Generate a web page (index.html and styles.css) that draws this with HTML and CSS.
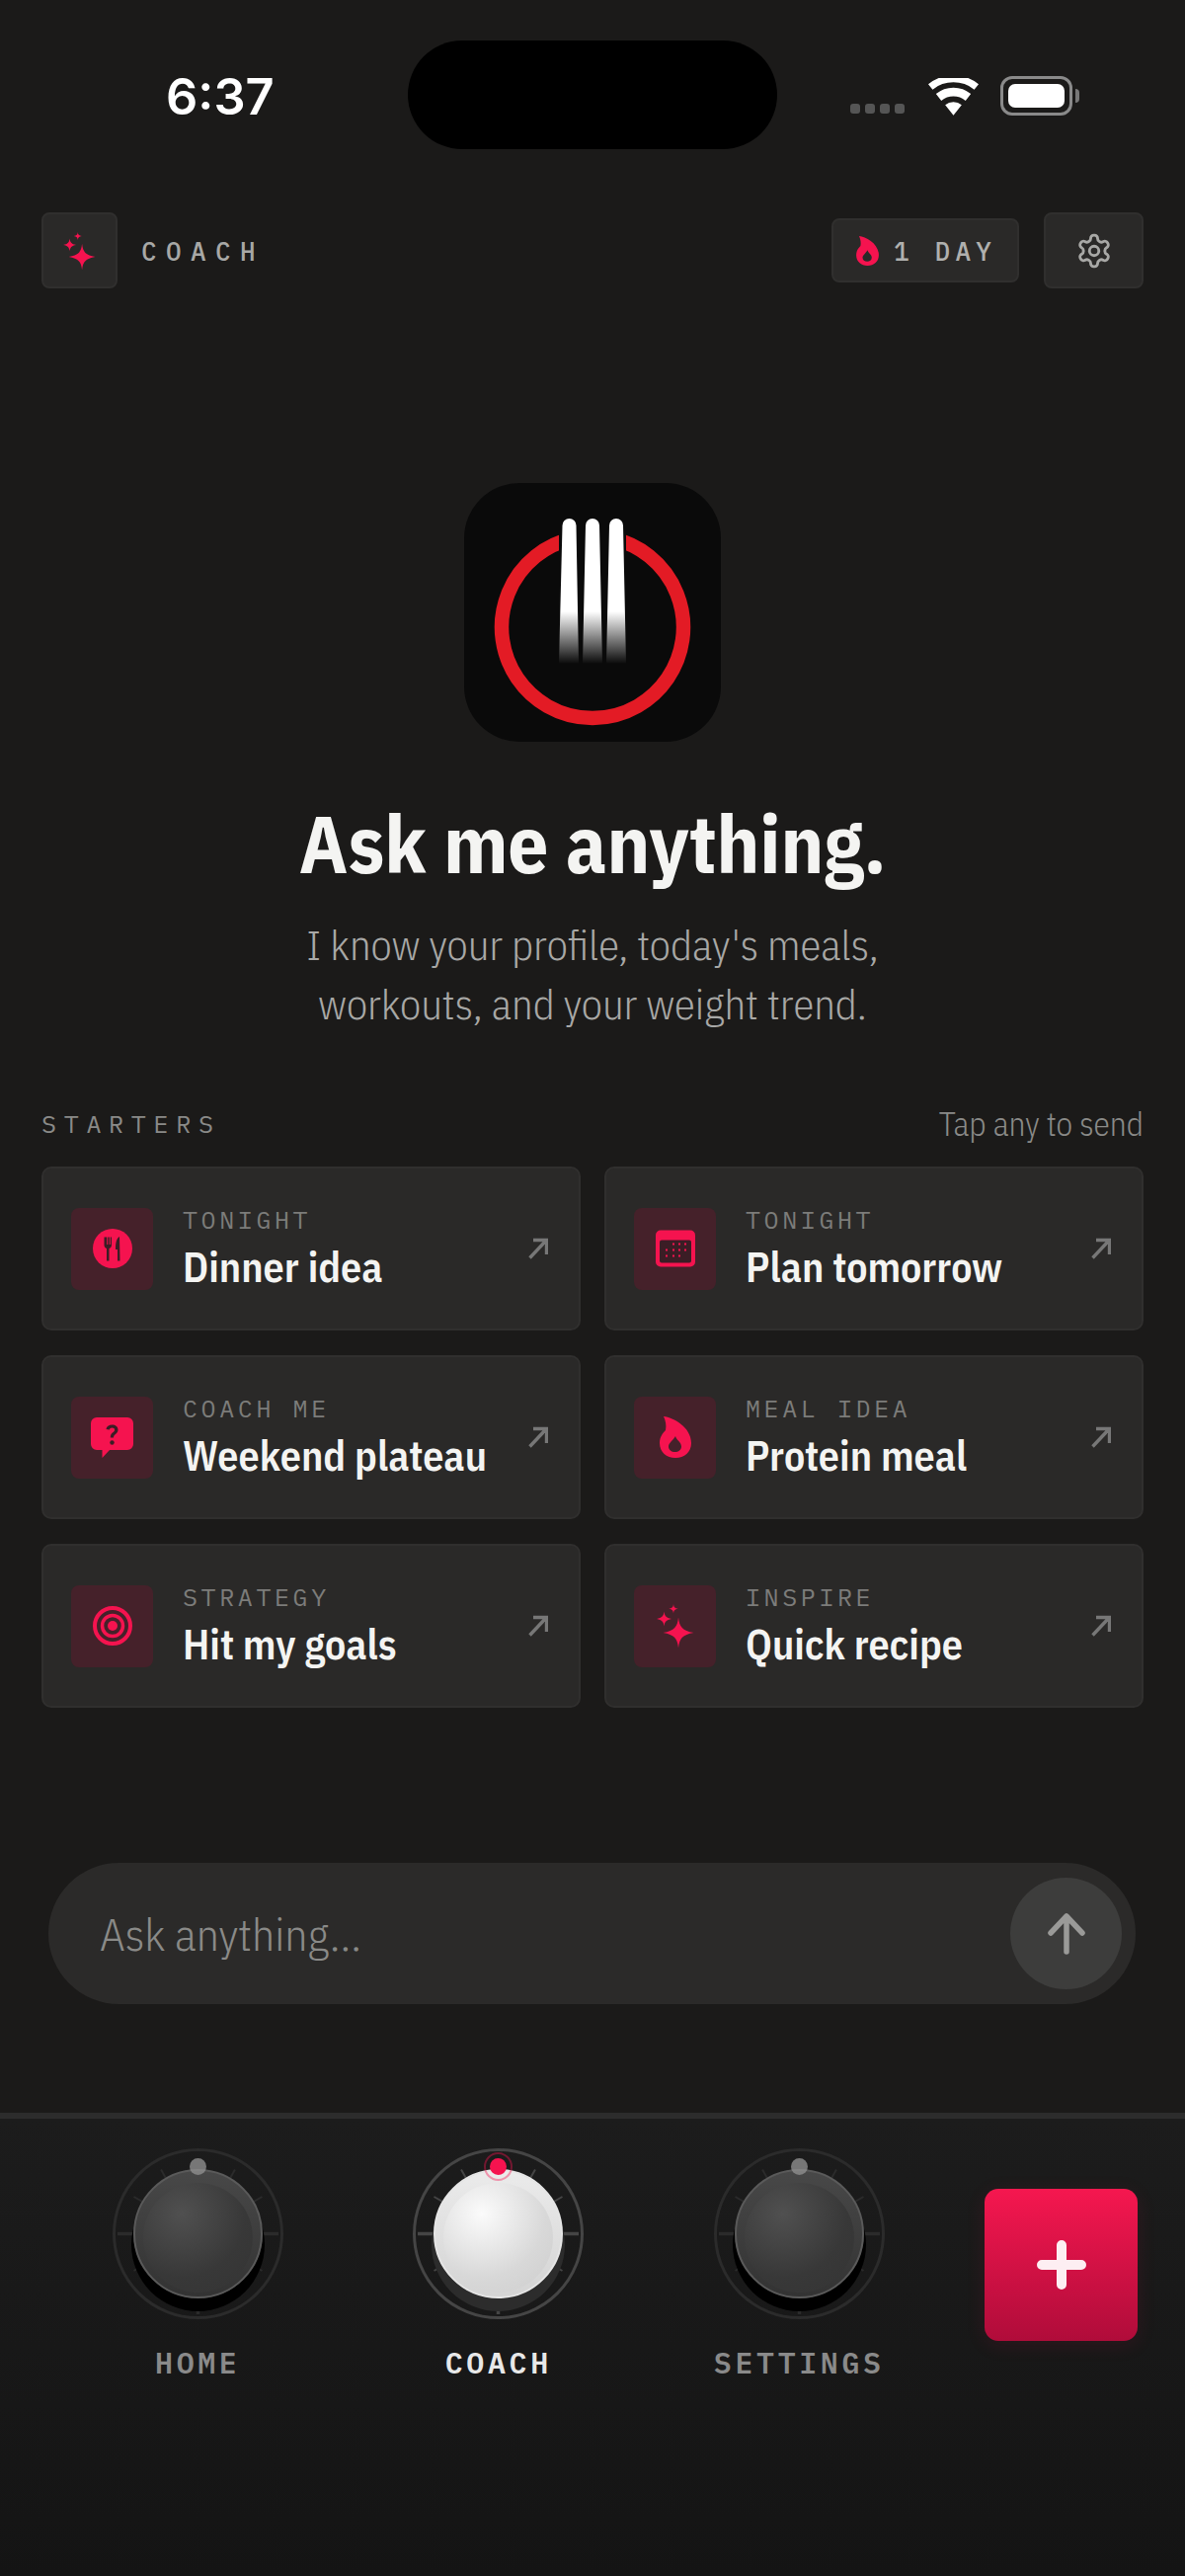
FILE: index.html
```html
<!DOCTYPE html>
<html lang="en">
<head>
    <meta charset="UTF-8">
    <meta name="viewport" content="width=device-width, initial-scale=1.0">
    <title>Coach</title>
    <link rel="stylesheet" href="styles.css">
</head>
<body>
<svg class="sprites" width="0" height="0" aria-hidden="true">
    <symbol id="spark" viewBox="0 0 38 44">
        <path d="M22 13.500C23 23 26 27 37.500 29 26 31 23 35 22 44.500 21 35 18 31 6.500 29 18 27 21 23 22 13.500z"/>
        <path d="M7.500 7.500C8 12 9.500 14 15 15 9.500 16 8 18 7.500 22.500 7 18 5.500 16 0 15 5.500 14 7 12 7.500 7.500z"/>
        <path d="M17 0c.3 3 1.200 4.200 4.700 4.700-3.500.5-4.400 1.700-4.700 4.700-.3-3-1.200-4.200-4.700-4.700C15.800 4.200 16.700 3 17 0z"/>
    </symbol>
    <symbol id="flame" viewBox="0 0 32 42">
        <path fill-rule="evenodd" d="M4 0C14 1 32 11 32 27 32 36 25 42 16 42 7 42 0 36 0 27 0 21 3 17 6 14 7 9 6 4 4 0zM16 20C17 24 22 26 22 30.500 22 34 19 36 15.500 36 12 36 9 34 9 30.500 9 27 13 25 16 20z"/>
    </symbol>
    <symbol id="arrow" viewBox="0 0 20 22">
        <path d="M1.500 20.500 18 3M5 2.500h13.500V17" fill="none" stroke="currentColor" stroke-width="3.400"/>
    </symbol>
    <symbol id="tick-set" viewBox="0 0 173 173">
        <g stroke="currentColor" stroke-width="2">
            <path d="M5 86.500h18M150 86.500h18" stroke-width="3.500"/>
            <path d="M86.500 150v18" stroke-width="3.500"/>
            <path d="M49 21.500l5 8.700M124 21.500l-5 8.700M21.500 49l8.700 5M151.500 49l-8.700 5M21.500 124l8.700-5M151.500 124l-8.700-5M49 151.500l5-8.700M124 151.500l-5-8.700"/>
        </g>
    </symbol>
</svg>

<div class="status-bar">
    <span class="clock">6:37</span>
    <div class="island"></div>
    <div class="status-icons">
        <div class="signal"><i></i><i></i><i></i><i></i></div>
        <svg class="wifi" viewBox="0 0 52 38"><path d="M26 38 17.500 27.500a13 13 0 0 1 17 0zM13.500 23 8 16a28 28 0 0 1 36 0l-5.500 7a20 20 0 0 0-25 0zM4.500 11.500 0 6a41 41 0 0 1 52 0l-4.500 5.500a34 34 0 0 0-43 0z" fill="#fff"/></svg>
        <div class="battery"><div class="battery-fill"></div></div>
    </div>
</div>

<header class="top-bar">
    <div class="top-left">
        <div class="square-btn coach-btn"><svg class="pink spark-sm"><use href="#spark"/></svg></div>
        <span class="coach-label">COACH</span>
    </div>
    <div class="top-right">
        <div class="streak"><svg class="pink streak-flame"><use href="#flame"/></svg><span>1 DAY</span></div>
        <div class="square-btn gear-btn">
            <svg class="gear" viewBox="0 0 24 24" fill="none" stroke="#a8a8a6" stroke-width="1.800" stroke-linecap="round" stroke-linejoin="round"><path d="M12.220 2h-.44a2 2 0 0 0-2 2v.18a2 2 0 0 1-1 1.730l-.43.25a2 2 0 0 1-2 0l-.15-.08a2 2 0 0 0-2.730.73l-.22.38a2 2 0 0 0 .73 2.730l.15.1a2 2 0 0 1 1 1.720v.51a2 2 0 0 1-1 1.740l-.15.09a2 2 0 0 0-.73 2.730l.22.38a2 2 0 0 0 2.730.73l.15-.08a2 2 0 0 1 2 0l.43.25a2 2 0 0 1 1 1.730V20a2 2 0 0 0 2 2h.44a2 2 0 0 0 2-2v-.18a2 2 0 0 1 1-1.730l.43-.25a2 2 0 0 1 2 0l.15.08a2 2 0 0 0 2.730-.73l.22-.39a2 2 0 0 0-.73-2.730l-.15-.08a2 2 0 0 1-1-1.740v-.5a2 2 0 0 1 1-1.740l.15-.09a2 2 0 0 0 .73-2.730l-.22-.38a2 2 0 0 0-2.730-.73l-.15.08a2 2 0 0 1-2 0l-.43-.25a2 2 0 0 1-1-1.730V4a2 2 0 0 0-2-2z"/><circle cx="12" cy="12" r="3"/></svg>
        </div>
    </div>
</header>

<section class="hero">
    <div class="app-icon">
        <svg viewBox="0 0 260 262" width="260" height="262">
            <defs>
                <linearGradient id="tine" x1="0" y1="0" x2="0" y2="1">
                    <stop offset="0.64" stop-color="#fff"/>
                    <stop offset="1" stop-color="#fff" stop-opacity="0"/>
                </linearGradient>
            </defs>
            <path d="M110 56.200A92 92 0 1 0 150 56.200" fill="none" stroke="#e31b25" stroke-width="14.500"/>
            <rect x="96" y="30" width="68" height="60" fill="#0a0a0a"/>
            <path d="M99.500 43a7 7 0 0 1 14 0L116 183H96z" fill="url(#tine)"/>
            <path d="M123 43a7 7 0 0 1 14 0L140 183H120z" fill="url(#tine)"/>
            <path d="M147 43a7 7 0 0 1 14 0L164 183H144z" fill="url(#tine)"/>
        </svg>
    </div>
    <h1>Ask me anything.</h1>
    <p>I know your profile, today's meals,<br>workouts, and your weight trend.</p>
</section>

<section class="starters">
    <div class="starters-head">
        <span class="starters-title">STARTERS</span>
        <span class="starters-hint">Tap any to send</span>
    </div>
    <div class="card-grid">
        <div class="card">
            <div class="card-icon">
                <svg class="ic" viewBox="0 0 40 40"><circle cx="20" cy="20" r="20" fill="#f5134f"/><path d="M11.500 8.500v8c0 2 1 3 2.500 3.500v12.500h2.500V20c1.500-.5 2.500-1.500 2.500-3.500v-8h-1.200V16h-1V8.500h-1.500V16h-1V8.500zM27 8c-3 1.500-4 6-4 13h2v11.500h2.500z" fill="#3b1d25"/></svg>
            </div>
            <div class="card-text"><span class="card-kicker">TONIGHT</span><span class="card-title">Dinner idea</span></div>
            <svg class="card-arrow"><use href="#arrow"/></svg>
        </div>
        <div class="card">
            <div class="card-icon">
                <svg class="ic" viewBox="0 0 40 37"><rect width="40" height="37" rx="5" fill="#f5134f"/><rect x="4" y="10" width="32" height="23" rx="2" fill="#3b1d25"/><g fill="#f5134f"><rect x="17" y="13" width="2" height="2"/><rect x="23" y="13" width="2" height="2"/><rect x="29" y="13" width="2" height="2"/><rect x="10" y="19" width="2" height="2"/><rect x="17" y="19" width="2" height="2"/><rect x="23" y="19" width="2" height="2"/><rect x="29" y="19" width="2" height="2"/><rect x="10" y="25" width="2" height="2"/><rect x="17" y="25" width="2" height="2"/><rect x="23" y="25" width="2" height="2"/></g></svg>
            </div>
            <div class="card-text"><span class="card-kicker">TONIGHT</span><span class="card-title">Plan tomorrow</span></div>
            <svg class="card-arrow"><use href="#arrow"/></svg>
        </div>
        <div class="card">
            <div class="card-icon">
                <svg class="ic ic-chat" viewBox="0 0 43 41"><path d="M6 0h31a6 6 0 0 1 6 6v21a6 6 0 0 1-6 6H19l-7.500 8v-8H6a6 6 0 0 1-6-6V6a6 6 0 0 1 6-6z" fill="#f5134f"/><path d="M15.500 12c.3-3 2.800-4.500 6-4.500 3.500 0 6 2 6 5 0 4.500-4.500 4-4.500 8h-3.200c0-5.500 4.300-5 4.300-8 0-1.200-1-2.100-2.600-2.100-1.500 0-2.500.8-2.700 2.100z" fill="#3b1d25"/><circle cx="21.500" cy="25.500" r="2.200" fill="#3b1d25"/></svg>
            </div>
            <div class="card-text"><span class="card-kicker">COACH ME</span><span class="card-title">Weekend plateau</span></div>
            <svg class="card-arrow"><use href="#arrow"/></svg>
        </div>
        <div class="card">
            <div class="card-icon"><svg class="pink ic-flame"><use href="#flame"/></svg></div>
            <div class="card-text"><span class="card-kicker">MEAL IDEA</span><span class="card-title">Protein meal</span></div>
            <svg class="card-arrow"><use href="#arrow"/></svg>
        </div>
        <div class="card">
            <div class="card-icon">
                <svg class="ic" viewBox="0 0 40 40" fill="none"><circle cx="20" cy="20" r="18" stroke="#f5134f" stroke-width="4"/><circle cx="20" cy="20" r="10.500" stroke="#f5134f" stroke-width="3.500"/><circle cx="20" cy="20" r="5" fill="#f5134f"/></svg>
            </div>
            <div class="card-text"><span class="card-kicker">STRATEGY</span><span class="card-title">Hit my goals</span></div>
            <svg class="card-arrow"><use href="#arrow"/></svg>
        </div>
        <div class="card">
            <div class="card-icon"><svg class="pink ic-spark"><use href="#spark"/></svg></div>
            <div class="card-text"><span class="card-kicker">INSPIRE</span><span class="card-title">Quick recipe</span></div>
            <svg class="card-arrow"><use href="#arrow"/></svg>
        </div>
    </div>
</section>

<div class="ask-bar">
    <span class="ask-placeholder">Ask anything...</span>
    <div class="send-btn">
        <svg viewBox="0 0 38 43" width="38" height="43" fill="none" stroke="#9a9a98" stroke-width="5.500" stroke-linecap="round" stroke-linejoin="round"><path d="M19 40V4M3 21 19 4l16 17"/></svg>
    </div>
</div>

<nav class="tab-bar">
    <div class="tab">
        <div class="dial">
            <svg class="ticks" viewBox="0 0 173 173"><use href="#tick-set"/></svg>
            <div class="knob"></div>
            <div class="dial-dot"></div>
        </div>
        <span class="tab-label">HOME</span>
    </div>
    <div class="tab tab-active">
        <div class="dial">
            <svg class="ticks" viewBox="0 0 173 173"><use href="#tick-set"/></svg>
            <div class="knob"></div>
            <div class="dial-dot"></div>
        </div>
        <span class="tab-label">COACH</span>
    </div>
    <div class="tab">
        <div class="dial">
            <svg class="ticks" viewBox="0 0 173 173"><use href="#tick-set"/></svg>
            <div class="knob"></div>
            <div class="dial-dot"></div>
        </div>
        <span class="tab-label">SETTINGS</span>
    </div>
    <div class="add-btn">
        <svg viewBox="0 0 50 50" width="50" height="50"><path d="M25 5v40M5 25h40" stroke="#fdeef2" stroke-width="10" stroke-linecap="round"/></svg>
    </div>
</nav>
</body>
</html>
```

FILE: styles.css
```css
* {
    box-sizing: border-box;
}
body {
    margin: 0;
    width: 1200px;
    height: 2608px;
    overflow: hidden;
    background-color: #1b1a19;
    font-family: 'IBM Plex Sans Condensed', 'Roboto', sans-serif;
    color: #f4f4f2;
}
.sprites {
    position: absolute;
}
.pink {
    fill: #f5134f;
}

/* status bar */
.status-bar {
    height: 215px;
    padding: 41px 64px 0 168px;
    display: flex;
    align-items: flex-start;
}
.clock {
    width: 245px;
    margin-top: 31px;
    font-family: 'Inter', sans-serif;
    font-size: 50.500px;
    line-height: 51px;
    font-weight: 600;
    color: #fff;
}
.island {
    width: 374px;
    height: 110px;
    border-radius: 55px;
    background-color: #000;
}
.status-icons {
    margin-left: 74px;
    margin-top: 36px;
    display: flex;
    align-items: flex-end;
    gap: 22px;
}
.signal {
    display: flex;
    gap: 5px;
    margin-bottom: 2px;
}
.signal i {
    width: 10px;
    height: 10px;
    border-radius: 3px;
    background-color: #555;
}
.wifi {
    width: 51px;
    height: 38px;
    margin-left: 2px;
}
.battery {
    position: relative;
    width: 73px;
    height: 40px;
    padding: 5px;
    border: 3px solid #8a8a8a;
    border-radius: 12px;
}
.battery::after {
    content: "";
    position: absolute;
    right: -10px;
    top: 10px;
    width: 4px;
    height: 14px;
    border-radius: 0 4px 4px 0;
    background-color: #777;
}
.battery-fill {
    height: 100%;
    border-radius: 7px;
    background-color: #fff;
}

/* header */
.top-bar {
    height: 77px;
    margin: 0 42px;
    display: flex;
    align-items: center;
    justify-content: space-between;
}
.top-left, .top-right {
    display: flex;
    align-items: center;
}
.square-btn {
    height: 77px;
    display: flex;
    align-items: center;
    justify-content: center;
    background-color: #2a2928;
    border: 2px solid #302f2e;
    border-radius: 8px;
}
.coach-btn {
    width: 77px;
}
.gear-btn {
    width: 101px;
}
.spark-sm {
    width: 33px;
    height: 38px;
}
.gear {
    width: 38px;
    height: 38px;
}
.coach-label {
    margin-left: 24px;
    font-family: 'IBM Plex Mono', 'Liberation Mono', monospace;
    font-size: 26px;
    font-weight: 500;
    letter-spacing: 9.400px;
    color: #a8a8a6;
}
.top-right {
    gap: 25px;
}
.streak {
    width: 190px;
    height: 65px;
    padding-left: 22px;
    display: flex;
    align-items: center;
    gap: 14px;
    background-color: #2a2928;
    border: 2px solid #302f2e;
    border-radius: 8px;
    font-family: 'IBM Plex Mono', 'Liberation Mono', monospace;
    font-size: 26px;
    font-weight: 500;
    letter-spacing: 5.200px;
    color: #b0b0ae;
}
.streak-flame {
    width: 25px;
    height: 30px;
}

/* hero */
.hero {
    padding-top: 197px;
    text-align: center;
}
.app-icon {
    width: 260px;
    height: 262px;
    margin: 0 auto;
    border-radius: 56px;
    background-color: #0a0a0a;
}
.app-icon svg {
    display: block;
}
.hero h1 {
    margin: 57px 0 0;
    font-size: 81px;
    line-height: 92px;
    font-weight: 700;
    color: #f4f4f2;
}
.hero p {
    margin: 26px 0 0;
    font-size: 42.500px;
    line-height: 60px;
    font-weight: 300;
    color: #a8a8a6;
}

/* starters */
.starters {
    margin: 69px 42px 0;
}
.starters-head {
    height: 44px;
    display: flex;
    align-items: center;
    justify-content: space-between;
}
.starters-title {
    font-family: 'IBM Plex Mono', 'Liberation Mono', monospace;
    font-size: 25px;
    letter-spacing: 7.700px;
    color: #8a8a88;
}
.starters-hint {
    font-size: 33.300px;
    font-weight: 300;
    color: #8a8a88;
}
.card-grid {
    margin-top: 22px;
    display: grid;
    grid-template-columns: 546px 546px;
    grid-auto-rows: 166px;
    gap: 25px 24px;
}
.card {
    padding-left: 28px;
    display: flex;
    align-items: center;
    background-color: #2a2928;
    border: 2px solid #302f2e;
    border-radius: 10px;
}
.card-icon {
    width: 83px;
    height: 83px;
    flex: none;
    display: flex;
    align-items: center;
    justify-content: center;
    background-color: #45212a;
    border-radius: 8px;
}
.ic {
    width: 40px;
    height: 40px;
}
.ic-chat {
    width: 43px;
    height: 41px;
}
.ic-flame {
    width: 32px;
    height: 42px;
}
.ic-spark {
    width: 38px;
    height: 44px;
}
.card-text {
    margin-left: 30px;
    display: flex;
    flex-direction: column;
    gap: 9px;
}
.card-kicker {
    font-family: 'IBM Plex Mono', 'Liberation Mono', monospace;
    font-size: 25px;
    line-height: 28px;
    letter-spacing: 3.600px;
    color: #7c7c7a;
}
.card-title {
    font-size: 42px;
    line-height: 50px;
    font-weight: 600;
    color: #f4f4f2;
}
.card-arrow {
    width: 20px;
    height: 22px;
    margin-left: auto;
    margin-right: 31px;
    color: #777;
}

/* input */
.ask-bar {
    width: 1101px;
    height: 143px;
    margin: 157px 0 0 49px;
    padding: 0 14px 0 52px;
    display: flex;
    align-items: center;
    justify-content: space-between;
    border-radius: 72px;
    background-color: #2b2a29;
}
.ask-placeholder {
    font-size: 45.500px;
    font-weight: 300;
    color: #8a8a88;
}
.send-btn {
    width: 113px;
    height: 113px;
    display: flex;
    align-items: center;
    justify-content: center;
    border-radius: 50%;
    background-color: #3d3d3c;
}

/* bottom tabs */
.tab-bar {
    height: 470px;
    margin-top: 110px;
    padding: 30px 48px 0;
    display: flex;
    align-items: flex-start;
    background: linear-gradient(#1c1c1c, #141414);
    border-top: 6px solid #2c2c2c;
}
.tab {
    width: 304.500px;
    display: flex;
    flex-direction: column;
    align-items: center;
}
.dial {
    position: relative;
    width: 173px;
    height: 173px;
    border-radius: 50%;
    border: 3px solid #2b2b2b;
    color: #2b2b2b;
}
.ticks {
    position: absolute;
    inset: -3px;
    width: 173px;
    height: 173px;
}
.knob {
    position: absolute;
    left: 18px;
    top: 18px;
    width: 131px;
    height: 131px;
    border-radius: 50%;
    border: 2px solid #5a5a5a;
    background: linear-gradient(#484848, #333);
    box-shadow: 0 11px 0 2px #000;
}
.knob::before {
    content: "";
    position: absolute;
    left: 8px;
    right: 8px;
    top: 12px;
    bottom: 4px;
    border-radius: 50%;
    background: radial-gradient(circle at 35% 28%, #505050, #383838 60%, #343434);
}
.dial-dot {
    position: absolute;
    left: 75px;
    top: 7px;
    width: 17px;
    height: 17px;
    border-radius: 50%;
    background-color: #8e8e8e;
    opacity: 0.8;
}
.tab-active .dial {
    border-color: #454545;
    color: #454545;
}
.tab-active .knob {
    border-color: #e6e6e6;
    background: linear-gradient(#ebebeb, #d4d4d4);
    box-shadow: 0 11px 0 2px #2c2c2c;
}
.tab-active .knob::before {
    background: radial-gradient(circle at 35% 28%, #fbfbfb, #d8d8d8 60%, #cdcdcd);
}
.tab-active .dial-dot {
    background-color: #f5134f;
    opacity: 1;
    outline: 2px solid rgba(245, 19, 79, 0.4);
    outline-offset: 4px;
}
.tab-label {
    margin-top: 26px;
    font-family: 'IBM Plex Mono', 'Liberation Mono', monospace;
    font-size: 30px;
    line-height: 36px;
    font-weight: 600;
    letter-spacing: 3.600px;
    color: #8a8a8a;
}
.tab-active .tab-label {
    color: #e8e8e8;
}
.add-btn {
    width: 155px;
    height: 154px;
    margin-top: 41px;
    margin-left: 35.500px;
    flex: none;
    display: flex;
    align-items: center;
    justify-content: center;
    border-radius: 14px;
    background: linear-gradient(#f5174f, #b00c3a);
    box-shadow: 0 4px 20px rgba(245, 19, 79, 0.1);
}
```
